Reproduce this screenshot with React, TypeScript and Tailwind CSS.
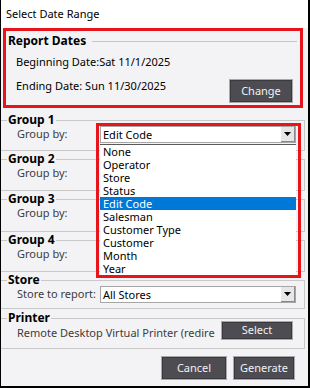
import React from "react";

const groups = ["Group 1", "Group 2", "Group 3", "Group 4"];
const heights = ["h-[39px]", "h-[40px]", "h-[41px]", "h-[40px]"];
const options = ["None", "Operator", "Store", "Status", "Edit Code", "Salesman", "Customer Type", "Customer", "Month", "Year"];

function Combo({ value }: { value: string }) {
  return (
    <div className="flex h-[17px] w-[196px] items-stretch border border-[#a6a6a6] bg-white">
      <span className="flex-1 whitespace-nowrap pl-[2px] text-[11px] leading-[15px] text-black">{value}</span>
      <span className="flex w-[14px] items-center justify-center border-b border-r border-b-[#8a8a8a] border-r-[#8a8a8a] bg-[#e6e6e6]">
        <svg width="7" height="4" viewBox="0 0 7 4">
          <path d="M0 0h7L3.5 4z" fill="#000" />
        </svg>
      </span>
    </div>
  );
}

function DarkButton({ label, className }: { label: string; className: string }) {
  return (
    <button className={`border border-[#a9a9a9] bg-[#4c4c52] text-[11px] text-[#f2f2f2] shadow-[inset_0_0_0_1px_#3a3a3e] ${className}`}>
      {label}
    </button>
  );
}

export default function App() {
  return (
    <div
      className="relative h-[388px] w-[310px] whitespace-nowrap border-b-2 border-l border-r-2 border-black bg-[#f3f3f6] text-black"
      style={{ fontFamily: '"Noto Sans", "Open Sans", sans-serif' }}
    >
      <div className="h-[28px] bg-white pl-[5px] pt-[6px] text-[11px] leading-[16px]">Select Date Range</div>

      <div className="ml-[2px] h-[80px] w-[300px] border-[3px] border-[#e8141c]">
        <div className="flex h-[20px] items-center">
          <span className="pl-[2px] text-[12px] font-bold">Report Dates</span>
          <span className="ml-[6px] mr-[3px] h-px flex-1 bg-[#c5c5c5]" />
        </div>
        <div className="mt-[4px] pl-[10px] text-[11px] leading-[14px]">Beginning Date:Sat 11/1/2025</div>
        <div className="mt-[10px] flex items-start justify-between">
          <span className="pl-[10px] text-[11px] leading-[14px]">Ending Date: Sun 11/30/2025</span>
          <DarkButton label="Change" className="mr-[7px] h-[24px] w-[64px]" />
        </div>
      </div>

      <div className="mt-[4px]">
        {groups.map((g, i) => (
          <fieldset key={g} className={`${heights[i]} w-[304px] border border-l-0 border-[#c8c8c8]`}>
            <legend className="ml-[6px] px-[1px] text-[12px] font-bold leading-[16px]">{g}</legend>
            <div className="-mt-[2px] flex h-[17px] items-center">
              <span className="w-[99px] pl-[16px] text-[11px] text-[#3c3c3c]">Group by:</span>
              {/* groups 2-4 sit under the open list, so their value is not seen */}
              <Combo value={i === 0 ? "Edit Code" : ""} />
            </div>
          </fieldset>
        ))}
        <fieldset className="h-[37px] w-[304px] border border-l-0 border-[#c8c8c8]">
          <legend className="ml-[6px] px-[1px] text-[12px] font-bold leading-[16px]">Store</legend>
          <div className="-mt-[2px] flex h-[17px] items-center">
            <span className="w-[99px] pl-[16px] text-[11px] text-[#3c3c3c]">Store to report:</span>
            <Combo value="All Stores" />
          </div>
        </fieldset>
        <fieldset className="mt-[1px] h-[39px] w-[304px] border border-l-0 border-[#c8c8c8]">
          <legend className="ml-[6px] px-[1px] text-[12px] font-bold leading-[16px]">Printer</legend>
          <div className="-mt-[5px] flex items-start">
            <span className="mt-[5px] pl-[16px] text-[11px] leading-[14px] text-[#3c3c3c]">Remote Desktop Virtual Printer (redire</span>
            <DarkButton label="Select" className="ml-auto mr-[11px] h-[19px] w-[72px]" />
          </div>
        </fieldset>
      </div>

      <div className="mt-[7px] flex justify-end gap-[6px] pr-[13px]">
        <DarkButton label="Cancel" className="h-[24px] w-[66px]" />
        <DarkButton label="Generate" className="h-[24px] w-[62px]" />
      </div>

      <div className="absolute left-[99px] top-[144px] h-[131px] w-[196px] border-t border-[#5a5a5a] bg-white">
        {options.map((o) => (
          <div
            key={o}
            className={`h-[13px] pl-[3px] text-[11px] leading-[13px] ${o === "Edit Code" ? "bg-[#0078d7] text-white" : "text-black"}`}
          >
            {o}
          </div>
        ))}
      </div>
      <div className="absolute left-[95px] top-[123px] h-[155px] w-[205px] border-[3px] border-[#e8141c]" />
    </div>
  );
}
